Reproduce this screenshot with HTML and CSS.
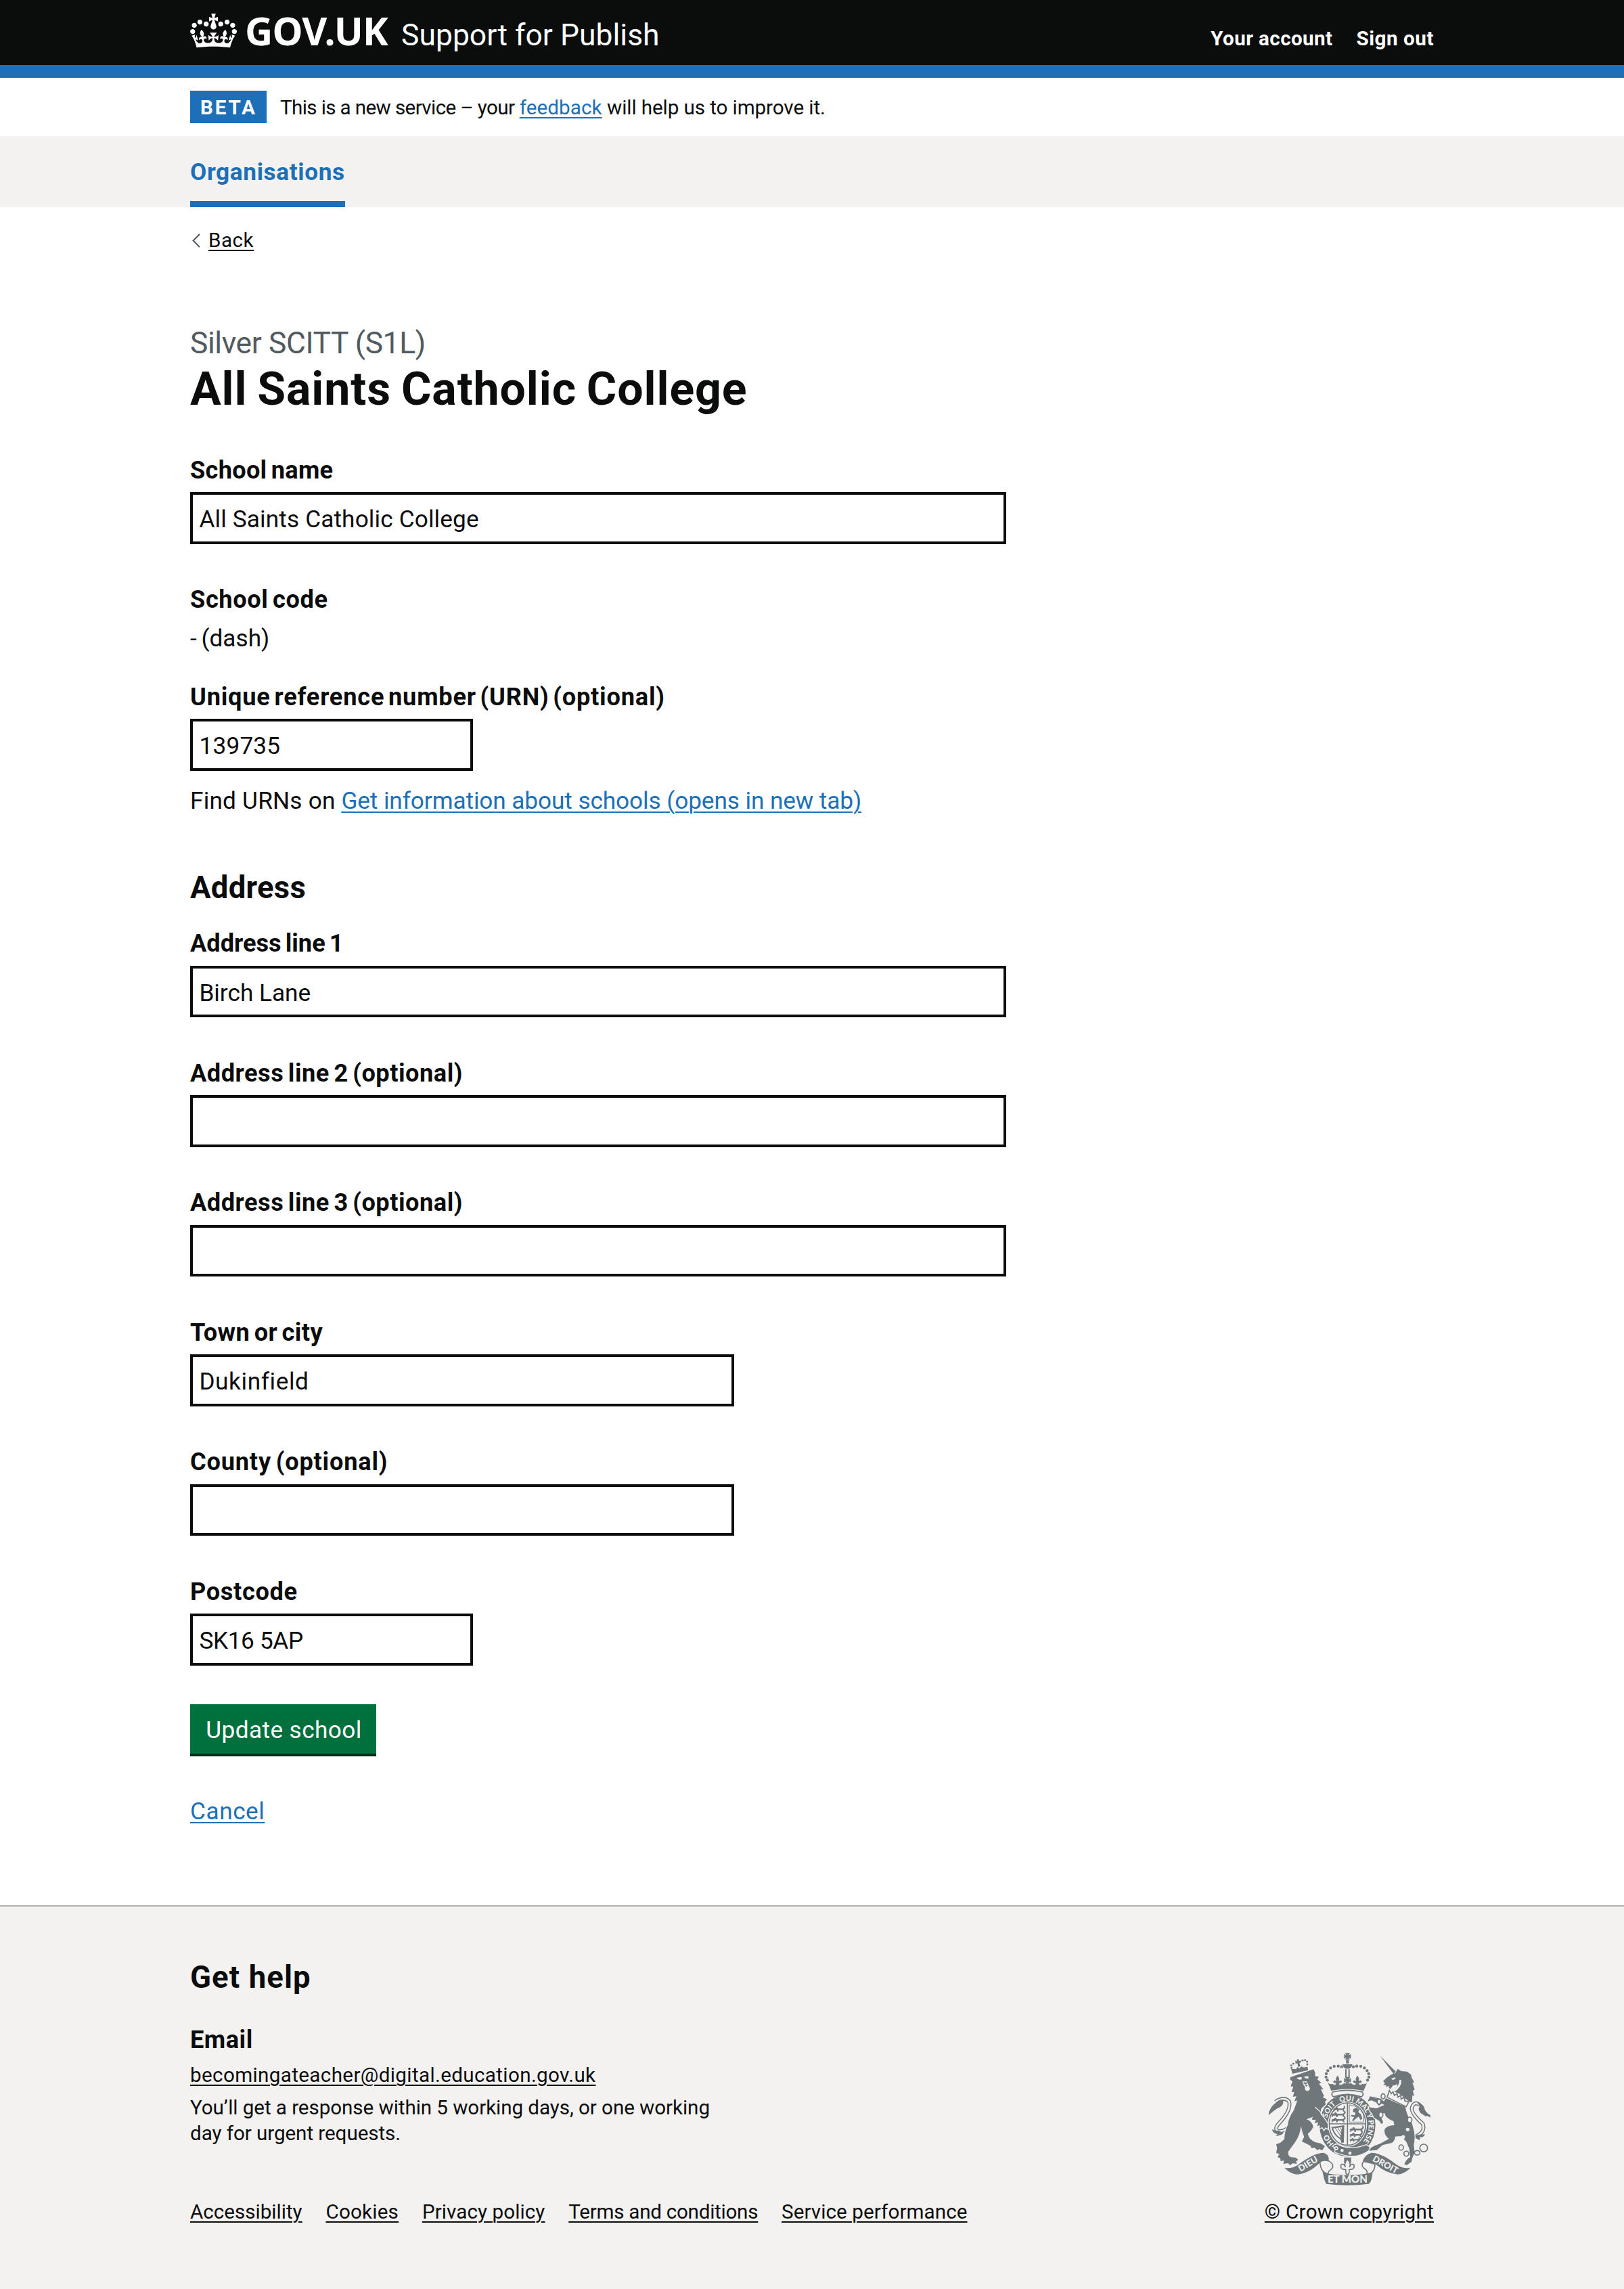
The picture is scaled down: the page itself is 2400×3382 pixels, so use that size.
FILE: index.html
```html
<!DOCTYPE html>
<html lang="en">
<head>
<meta charset="utf-8">
<title>All Saints Catholic College - Support for Publish - GOV.UK</title>
<link rel="stylesheet" href="styles.css">
</head>
<body>
<header class="header">
  <div class="container header-row">
    <svg class="crown" viewBox="0 0 132 97" aria-hidden="true"><path fill="currentColor" fill-rule="evenodd" d="M25 30.2c3.5 1.5 7.7-.2 9.1-3.7 1.5-3.6-.2-7.8-3.9-9.2-3.6-1.4-7.6.3-9.1 3.9-1.4 3.5.3 7.5 3.9 9zM9 39.5c3.6 1.5 7.8-.2 9.2-3.7 1.5-3.6-.2-7.8-3.9-9.1-3.6-1.5-7.6.2-9.1 3.8-1.4 3.5.3 7.5 3.8 9zM4.4 57.2c3.5 1.5 7.7-.2 9.1-3.8 1.5-3.6-.2-7.7-3.9-9.1-3.5-1.5-7.6.3-9.1 3.8-1.4 3.5.3 7.6 3.9 9.1zm38.3-21.4c3.5 1.5 7.7-.2 9.1-3.8 1.5-3.6-.2-7.7-3.9-9.1-3.6-1.5-7.6.3-9.1 3.8-1.3 3.6.4 7.7 3.9 9.1zm64.4-5.6c-3.6 1.5-7.8-.2-9.1-3.7-1.5-3.6.2-7.8 3.8-9.2 3.6-1.4 7.7.3 9.2 3.9 1.3 3.5-.4 7.5-3.9 9zm15.9 9.3c-3.6 1.5-7.7-.2-9.1-3.7-1.5-3.6.2-7.8 3.7-9.1 3.6-1.5 7.7.2 9.2 3.8 1.5 3.5-.3 7.5-3.8 9zm4.7 17.7c-3.6 1.5-7.8-.2-9.2-3.8-1.5-3.6.2-7.7 3.9-9.1 3.6-1.5 7.7.3 9.2 3.8 1.3 3.5-.4 7.6-3.9 9.1zM89.3 35.8c-3.6 1.5-7.8-.2-9.2-3.8-1.4-3.6.2-7.7 3.9-9.1 3.6-1.5 7.7.3 9.2 3.8 1.4 3.6-.3 7.7-3.9 9.1zM69.7 17.7l8.9 4.7V9.3l-8.9 2.8c-.2-.3-.5-.6-.9-.9L72.4 0H59.6l3.5 11.2c-.3.3-.6.5-.9.9l-8.8-2.8v13.1l8.8-4.7c.3.3.6.7.9.9l-5 15.4v.1c-.2.8-.4 1.6-.4 2.4 0 4.1 3.1 7.5 7 8.1h.2c.3 0 .7.1 1 .1.4 0 .7 0 1-.1h.2c4-.6 7.1-4.1 7.1-8.1 0-.8-.1-1.7-.4-2.4V34l-5.1-15.4c.4-.2.7-.6 1-.9zM66 92.8c16.9 0 32.8 1.1 47.1 3.2 4-16.9 8.9-26.7 14-33.5l-9.6-3.4c1 4.9 1.1 7.2 0 10.2-1.5-1.4-3-4.3-4.2-8.7L108.6 76c2.8-2 5-3.2 7.5-3.3-4.4 9.4-10 11.9-13.6 11.2-4.3-.8-6.3-4.6-5.6-7.9 1-4.7 5.7-5.9 8-.5 4.3-8.7-3-11.4-7.6-8.8 7.1-7.2 7.9-13.5 2.1-21.1-8 6.1-8.1 12.3-4.5 20.8-4.7-5.4-12.1-2.5-9.5 6.2 3.4-5.2 7.9-2 7.2 3.1-.6 4.3-6.4 7.8-13.5 7.2-10.3-.9-10.9-8-11.2-13.8 2.5-.5 7.1 1.8 11 7.3L80.2 60c-4.1 4.4-8 5.3-12.3 5.4 1.4-4.4 8-11.6 8-11.6H55.5s6.4 7.2 7.9 11.6c-4.2-.1-8-1-12.3-5.4l1.4 16.4c3.9-5.5 8.5-7.7 10.9-7.3-.3 5.8-.9 12.8-11.1 13.8-7.2.6-12.9-2.9-13.5-7.2-.7-5 3.8-8.3 7.1-3.1 2.7-8.7-4.6-11.6-9.4-6.2 3.7-8.5 3.6-14.7-4.6-20.8-5.8 7.6-5 13.9 2.2 21.1-4.7-2.6-11.9.1-7.7 8.8 2.3-5.5 7.1-4.2 8.1.5.7 3.3-1.3 7.1-5.7 7.9-3.5.7-9-1.8-13.5-11.2 2.5.1 4.7 1.3 7.5 3.3l-4.7-15.4c-1.2 4.4-2.7 7.2-4.3 8.7-1.1-3-.9-5.3 0-10.2l-9.5 3.4c5 6.9 9.9 16.7 14 33.5 14.8-2.1 30.8-3.2 47.7-3.2z"/></svg>
    <span class="logotype">GOV.UK</span>
    <span class="product">Support for Publish</span>
    <nav class="account">
      <a class="account-link your-account">Your account</a>
      <a class="account-link sign-out">Sign out</a>
    </nav>
  </div>
</header>

<div class="container phase">
  <strong class="tag">BETA</strong>
  <p class="phase-text"><span class="phase-lead">This is a new service – your</span> <a class="link feedback">feedback</a> <span class="phase-tail">will help us to improve it.</span></p>
</div>

<nav class="primary-nav">
  <div class="container"><a class="nav-current">Organisations</a></div>
</nav>

<main class="container">
  <a class="back"><svg class="chevron" viewBox="0 0 12 21" aria-hidden="true"><path d="M11 1 1.6 10.5 11 20" fill="none" stroke="#505a5f" stroke-width="2"/></svg><span class="back-text">Back</span></a>
  <p class="caption">Silver SCITT (S1L)</p>
  <h1 class="title">All Saints Catholic College</h1>

  <div class="field">
    <label class="label school-label" for="name">School name</label>
    <input class="input full name-value" id="name" value="All Saints Catholic College">
  </div>
  <div class="code">
    <p class="label code-label">School code</p>
    <p class="code-value">- (dash)</p>
  </div>
  <div class="urn">
    <label class="label urn-label" for="urn">Unique reference number (URN) (optional)</label>
    <input class="input short urn-value" id="urn" value="139735">
    <p class="hint"><span class="hint-lead">Find URNs on</span> <a class="link hint-link">Get information about schools (opens in new tab)</a></p>
  </div>

  <h2 class="section-title">Address</h2>
  <div class="field">
    <label class="label line1-label" for="a1">Address line 1</label>
    <input class="input full" id="a1" value="Birch Lane">
  </div>
  <div class="field">
    <label class="label" for="a2">Address line 2 (optional)</label>
    <input class="input full" id="a2">
  </div>
  <div class="field">
    <label class="label" for="a3">Address line 3 (optional)</label>
    <input class="input full" id="a3">
  </div>
  <div class="field">
    <label class="label town-label" for="town">Town or city</label>
    <input class="input medium town-value" id="town" value="Dukinfield">
  </div>
  <div class="field">
    <label class="label county-label" for="county">County (optional)</label>
    <input class="input medium" id="county">
  </div>
  <div class="field">
    <label class="label postcode-label" for="postcode">Postcode</label>
    <input class="input short postcode-value" id="postcode" value="SK16 5AP">
  </div>
  <button class="button" type="button">Update school</button>
  <p class="cancel"><a class="link cancel-link">Cancel</a></p>
</main>

<footer class="footer">
  <div class="container footer-row">
    <div class="footer-main">
      <h2 class="help-title">Get help</h2>
      <h3 class="help-subtitle">Email</h3>
      <p class="small email"><a class="dark-link">becomingateacher@digital.education.gov.uk</a></p>
      <p class="small response">You’ll get a response within 5 working days, or one working<br>day for urgent requests.</p>
      <div class="small footer-links">
        <a class="dark-link">Accessibility</a>
        <a class="dark-link cookies">Cookies</a>
        <a class="dark-link privacy">Privacy policy</a>
        <a class="dark-link terms">Terms and conditions</a>
        <a class="dark-link service">Service performance</a>
      </div>
    </div>
    <div class="copyright">
      <svg class="crest" viewBox="100 66 720 594" aria-hidden="true">
        <defs>
          <path id="garter" d="M452 496A94 107 0 0 1 452 282A94 107 0 0 1 452 496"/>
          <g id="cross"><path d="M-15-11Q-9-7-4-4Q-7-9-11-15H11Q7-9 4-4Q9-7 15-11V11Q9 7 4 4Q7 9 11 15H-11Q-7 9-4 4Q-9 7-15 11z"/></g>
          <g id="fleur"><path d="M0-20Q12-6 5 6Q15-4 19 6Q18 16 9 12L7 20H-7L-9 12Q-18 16-19 6Q-15-4-5 6Q-12-6 0-20z"/></g>
          <g id="passant"><path d="M0 16Q2 4 12 8Q14-2 22 2L26 8H50Q58 4 58-4L52-6Q62-10 64 0Q64 10 56 14L60 24H52L50 16H30L28 24H20L22 16L10 18L6 24H0L6 16z"/></g>
        </defs>

        <!-- royal crown -->
        <g class="ink">
          <use href="#cross" x="452" y="85"/>
          <path d="M446 102h12v14h-12zM430 120h44q-3 20-22 20t-22-20zM442 142h6v38h-6zM456 142h6v38h-6z"/>
          <g id="arch"><circle cx="426" cy="131" r="6.5"/><circle cx="411" cy="128" r="6.5"/><circle cx="393" cy="129" r="6.5"/><circle cx="377" cy="136" r="6.5"/><circle cx="365" cy="148" r="6.5"/><circle cx="358" cy="162" r="6.5"/><circle cx="357" cy="177" r="6.5"/><circle cx="363" cy="190" r="6.5"/></g>
          <use href="#arch" transform="matrix(-1 0 0 1 904 0)"/>
          <path d="M364 198Q372 212 386 206Q392 214 404 208H412Q424 216 436 204L446 206H458L468 204Q480 216 492 208H500Q512 214 518 206Q532 212 540 198L524 237Q452 222 380 237z"/>
          <use href="#fleur" x="408" y="190"/><use href="#fleur" x="496" y="190"/><use href="#cross" x="452" y="191"/>
        </g>

        <!-- garter and shield -->
        <ellipse class="ink" cx="452" cy="390" rx="124" ry="139"/>
        <path class="paper line" d="M386 243Q452 227 518 243Q526 256 514 264Q452 242 390 264Q378 256 386 243z"/>
        <ellipse class="paper" cx="452" cy="385" rx="87" ry="100"/>
        <ellipse class="ring" cx="452" cy="385" rx="81" ry="94"/>
        <path class="ring" d="M452 291V479M371 384H533"/>
        <g class="ink">
          <use href="#passant" transform="translate(388 309) scale(.85)"/><use href="#passant" transform="translate(380 332) scale(1 .9)"/><use href="#passant" transform="translate(380 356) scale(1 .9)"/>
          <use href="#passant" transform="translate(461 398) scale(1 .9)"/><use href="#passant" transform="translate(461 422) scale(.92 .9)"/><use href="#passant" transform="translate(461 446) scale(.72)"/>
          <path d="M478 318l14-6 12 8-4 12 12 10 6 18-8 8-8-16-12 8-12 12-6-4 10-14-12-2-2-8 16 2 4-10-12-6z"/>
          <path d="M380 398l58-8-2 76-10 4-6-18q-30-16-40-54zm8 6q10 28 32 42l8-48z" fill-rule="evenodd"/>
        </g>
        <path class="thin" d="M460 300Q500 302 524 340V376H460zM398 402l28 44M408 400l20 32M418 398l10 18"/>
        <g class="motto garter-text">
          <text><textPath href="#garter" startOffset="14.5%">HO</textPath></text>
          <text><textPath href="#garter" startOffset="35.6%">SOIT</textPath></text>
          <text><textPath href="#garter" startOffset="49.4%">QUI</textPath></text>
          <text><textPath href="#garter" startOffset="61%">MAL</textPath></text>
          <text><textPath href="#garter" startOffset="69%">Y</textPath></text>
          <text><textPath href="#garter" startOffset="79.5%">PENSE</textPath></text>
        </g>
        <path class="ink edge" d="M386 484Q400 466 416 478Q470 502 536 476Q560 488 548 502Q500 538 440 524Q404 516 394 508Q404 496 386 484z"/>
        <circle class="paper" cx="402" cy="492" r="9"/><circle class="ink" cx="402" cy="492" r="4"/>
        <circle class="paper" cx="428" cy="502" r="7"/><circle class="paper" cx="463" cy="514" r="7"/>

        <!-- pendant -->
        <path class="ink" d="M437 533h31v24h-31z"/>
        <path class="paper line" d="M452 540Q470 562 461 576Q468 556 481 566Q484 586 468 586Q456 584 460 594Q460 608 452 608Q444 608 444 594Q448 584 436 586Q420 586 423 566Q436 556 443 576Q434 562 452 540z"/>

        <!-- ribbons -->
        <g class="ink">
          <path d="M172 578Q204 584 232 566Q304 512 346 512Q374 520 368 548Q340 540 330 556Q280 606 228 608Q196 604 172 578z"/>
          <path d="M732 578Q700 584 672 566Q604 512 558 512Q530 520 520 548Q536 574 576 562Q624 606 676 608Q708 604 732 578z"/>
          <path d="M340 584Q352 604 390 608Q452 614 514 608Q552 604 564 584Q562 640 546 650Q452 662 358 650Q346 630 340 584z"/>
        </g>
        <path class="paper line" d="M330 552Q346 540 372 550Q396 566 382 584Q364 596 366 606Q340 600 334 576Q330 562 330 552z"/>
        <path class="paper line" d="M524 550Q550 556 574 562Q574 588 560 600Q550 608 538 606Q544 592 524 580Q510 566 524 550z"/>
        <g class="motto">
          <text transform="translate(284 573) rotate(-31)">DIEU</text>
          <text transform="translate(614 576) rotate(29)">DROIT</text>
          <text class="motto-base" x="452" y="646">ET MON</text>
        </g>

        <!-- lion -->
        <g transform="translate(90 54)">
          <path class="tail" d="M42 232Q84 206 104 232Q112 270 62 324Q34 352 54 362Q84 366 112 334"/>
          <path class="tail-gap" d="M42 232Q84 206 104 232Q112 270 62 324Q34 352 54 362Q84 366 112 334"/>
          <path class="ink" d="M12 292Q14 256 48 234Q58 222 76 222Q84 250 50 262Q30 276 12 292zM28 354Q40 362 58 360L78 372Q66 382 44 384L52 376Q30 372 28 354z"/>
          <path class="ink halo" fill-rule="evenodd" d="M108 124L124 118L212 88L219 104L218 118L236 122L228 132L246 148L236 152L256 178L244 176L258 206L252 212L272 222L262 232L266 244L246 262L242 286L258 306L275 330V352L264 346L258 356L250 344L238 350L240 336L228 340L232 324L216 326L222 312L206 312Q202 306 212 298L180 310Q206 318 210 344Q200 364 186 374Q192 400 220 412Q246 414 262 430L256 438L250 448L238 442L228 446L216 436L204 438L196 426L160 408L170 388Q160 366 156 340Q152 382 128 414L100 452Q96 472 112 478L134 480L144 490L134 496L138 508L120 504L108 514L98 504L78 508L80 492L66 496L64 482L52 478L60 464L46 458L50 438L46 420L64 414L82 398Q84 360 98 334Q100 304 124 270L140 226L126 230L136 208L120 210L126 188L114 190L122 164L110 164L118 142L108 134z"/>
          <path class="paper" d="M136 126L158 122L160 132Q146 138 136 126zM168 122L188 118L190 128Q178 132 168 122zM162 142H182L196 174Q192 186 182 184Q170 180 174 168L166 154z"/>
          <path class="ink" d="M166 146h18l-4 8h-10zM174 154l12 6-8 6z"/>
          <path class="cut" d="M218 256Q240 272 252 290"/>
          <g class="ink"><path d="M112 88Q126 84 134 88L140 78L150 84L158 74Q166 84 184 76L188 92L118 108z"/><path d="M131 49l8 5-2-9 9-2 1 9 8-3 2 9-8 1 4 16-10 3-3-17-8 3z"/>
            <circle cx="114" cy="82" r="4.5"/><circle cx="113" cy="71" r="4.5"/><circle cx="122" cy="63" r="4.5"/><circle cx="163" cy="49" r="4.5"/><circle cx="174" cy="47" r="4.5"/><circle cx="183" cy="54" r="4.5"/><circle cx="184" cy="66" r="4.5"/></g>
        </g>

        <!-- unicorn -->
        <g transform="translate(450 54)">
          <path class="ink" d="M146 28L216 98L206 108z"/>
          <path class="tail" d="M298 388Q350 370 336 330Q280 280 288 256Q300 228 322 246"/>
          <path class="tail-gap" d="M298 388Q350 370 336 330Q280 280 288 256Q300 228 322 246"/>
          <path class="ink" d="M312 236Q340 240 344 264Q350 282 370 292L368 304Q364 294 348 296L326 282Q312 264 322 252zM284 366Q300 384 318 378L346 376Q340 392 322 390L324 402Q300 398 284 366z"/>
          <path class="ink" fill-rule="evenodd" d="M160 140L180 122Q204 106 214 106L224 86L240 96L266 98L284 112L286 124L298 146L290 148L300 178L292 184L298 206L290 204L288 234L276 232L252 212L230 196L200 184Q228 166 222 152Q216 160 204 160L192 176L184 168L188 162L172 166L174 158L160 158L168 150z"/>
          <path class="paper" d="M196 130L212 124L216 130L202 136zM240 134Q244 168 206 190L200 184Q236 160 232 136z"/>
          <path class="ink halo" d="M172 216L258 254Q264 290 288 328L298 366Q302 400 296 424L300 458L290 480L286 498L264 514L254 508Q262 488 280 478L276 440L264 412Q252 396 240 384L214 386Q212 404 200 414L158 424L132 446L98 449Q104 434 120 428L150 416L186 396Q164 382 166 356Q176 336 210 336L206 318Q172 306 166 282L144 286L138 292Q158 304 160 326L152 330L144 318L120 302L112 286L100 270L96 256L130 262L166 246L154 240L142 250L128 234L108 226L92 230L102 208L128 214L148 218L164 230z"/>
          <path class="paper line" d="M188 182L196 196L204 188L210 204L222 196L226 212L238 204L240 220L254 212L256 228L274 232L262 254L178 212z"/>
          <g class="chain"><ellipse cx="160" cy="208" rx="9" ry="11"/><ellipse cx="142" cy="232" rx="8" ry="11"/><ellipse cx="150" cy="290" rx="9" ry="12"/><ellipse cx="278" cy="312" rx="10" ry="12"/><ellipse cx="240" cy="435" rx="10" ry="12"/><circle cx="263" cy="462" r="11"/><ellipse cx="311" cy="458" rx="12" ry="10"/><circle cx="340" cy="437" r="17"/></g>
          <circle class="paper" cx="269" cy="355" r="8"/><circle class="paper" cx="249" cy="388" r="8"/>
        </g>
      </svg>
      <a class="dark-link copy-link">© Crown copyright</a>
    </div>
  </div>
</footer>
</body>
</html>
```
FILE: styles.css
```css
*{box-sizing:border-box}
body{margin:0;background:#fff;color:#0b0c0c;font-family:Roboto,"Open Sans",sans-serif;font-size:35.2px}
p,h1,h2,h3{margin:0}
.container{width:1838px;margin:0 auto}

.header{height:115px;background:#0b0c0c;border-bottom:19px solid #1d70b8;color:#fff}
.header-row{display:flex;align-items:baseline;padding-top:16.5px}
.crown{display:block;flex:none;align-self:flex-start;width:69px;height:51px;margin-top:3.5px}
.logotype{margin-left:12px;font:700 57px/57px "Noto Sans",sans-serif;letter-spacing:-.8px}
.product{margin-left:20px;font-size:44.4px;line-height:50px;letter-spacing:.04px}
.account{display:flex;gap:35px;margin-left:auto}
.account-link{font-weight:700;font-size:29.6px;line-height:38px}
.your-account{letter-spacing:.39px}
.sign-out{letter-spacing:.55px}

.phase{display:flex;align-items:flex-start;height:86px;padding-top:19px}
.tag{width:113px;height:48px;padding:.5px 0 0 15px;background:#1d70b8;color:#fff;font-size:29.6px;line-height:48px;letter-spacing:2.79px}
.phase-text{margin-left:20px;font-size:29.6px;line-height:50px;letter-spacing:-.08px}
.phase-lead{letter-spacing:-.62px}
.feedback{letter-spacing:.11px}

.link,.dark-link,.back-text{text-decoration:underline;text-decoration-thickness:2px;text-underline-offset:4px}
.link{color:#1d70b8}
.dark-link{color:#0b0c0c}

.primary-nav{height:105px;background:#f3f2f1}
.nav-current{display:inline-block;padding:29px 0 19px;border-bottom:9px solid #1d70b8;color:#1d70b8;font-weight:700;line-height:48px;letter-spacing:.63px;vertical-align:top}

.back{display:flex;align-items:center;margin-top:30px;font-size:29.6px;line-height:38px;letter-spacing:.49px}
.chevron{width:12px;height:21px;margin:0 12px 0 3px}
.caption{margin-top:105px;color:#505a5f;font-size:44.4px;line-height:57px;letter-spacing:-.39px}
.title{margin-top:1px;font-size:68px;line-height:76px;letter-spacing:.92px;word-spacing:-3px}
.title + .field{margin-top:56.6px}

.field{margin-bottom:57.5px}
.label{display:block;margin-bottom:8.2px;font-size:36.2px;font-weight:700;line-height:49.2px;letter-spacing:.52px;word-spacing:-3px}
.school-label{letter-spacing:.27px}
.code-label{letter-spacing:.6px}
.urn-label{letter-spacing:.79px;word-spacing:-4px}
.line1-label{letter-spacing:0}
.town-label{letter-spacing:.4px}
.county-label{letter-spacing:.8px}
.postcode-label{letter-spacing:.64px}
.input{display:block;height:76.6px;padding:3.4px 9.4px 0;border:4px solid #0b0c0c;border-radius:0;background:#fff;color:#0b0c0c;font:35.2px Roboto,sans-serif}
.full{width:1206px}
.medium{width:804px}
.short{width:418px}
.name-value{letter-spacing:.14px}
.urn-value{letter-spacing:.22px}
.town-value{letter-spacing:.6px}
.postcode-value{letter-spacing:-.35px}
.code-value{margin-top:9.2px;line-height:48px;word-spacing:-2px}
.code{margin-bottom:37.4px}
.code .label{margin-bottom:0}
.hint{margin-top:20px;line-height:48px}
.hint-lead{letter-spacing:.22px}
.hint-link{letter-spacing:-.09px}
.section-title{margin:76.3px 0 29.1px;font-size:45.5px;line-height:57px;letter-spacing:.25px}

.button{display:block;width:275px;height:76.6px;padding:2.6px 0 0 2px;border:0;border-bottom:4px solid #002d18;background:#00703c;color:#fff;font:35.2px/70px Roboto,sans-serif;letter-spacing:.4px}
.cancel{margin-top:57.6px;line-height:48px}
.cancel-link{letter-spacing:.55px}

.footer{margin-top:114.5px;padding:76.3px 0 95px;border-top:2px solid #b1b4b6;background:#f3f2f1}
.footer-row{display:flex;justify-content:space-between;align-items:flex-end}
.help-title{font-size:45.5px;line-height:57px;letter-spacing:1.1px}
.help-subtitle{margin-top:39.4px;font-size:36.2px;line-height:48px;letter-spacing:.5px}
.small{font-size:29.6px;line-height:38.3px}
.email{margin-top:9.6px;letter-spacing:.37px}
.response{margin-top:9.2px;letter-spacing:-.06px}
.footer-links{display:flex;gap:34.8px;margin-top:77.4px}
.privacy{letter-spacing:.09px}
.cookies{letter-spacing:.21px}
.terms{letter-spacing:-.25px}
.service{letter-spacing:.08px}

.copyright{display:flex;flex-direction:column;align-items:center;font-size:29.6px;line-height:38.3px;letter-spacing:.3px}
.crest{display:block;width:240px;height:198px;margin-bottom:18.8px}
.ink{fill:#6f777b}
.paper{fill:#f3f2f1}
.line{stroke:#6f777b;stroke-width:5}
.ring{fill:none;stroke:#6f777b;stroke-width:5}
.thin{fill:none;stroke:#6f777b;stroke-width:3}
.edge,.cut{stroke:#f3f2f1;stroke-width:4}
.halo{stroke:#f3f2f1;stroke-width:8;paint-order:stroke}
.cut{fill:none}
.tail{fill:none;stroke:#6f777b;stroke-width:17}
.tail-gap{fill:none;stroke:#f3f2f1;stroke-width:8}
.chain{fill:#f3f2f1;stroke:#6f777b;stroke-width:5}
.motto{fill:#f3f2f1;font:900 39px Lato,sans-serif;letter-spacing:0;text-anchor:middle}
.garter-text{font-size:32px}
.motto-base{font-size:45px}
```
